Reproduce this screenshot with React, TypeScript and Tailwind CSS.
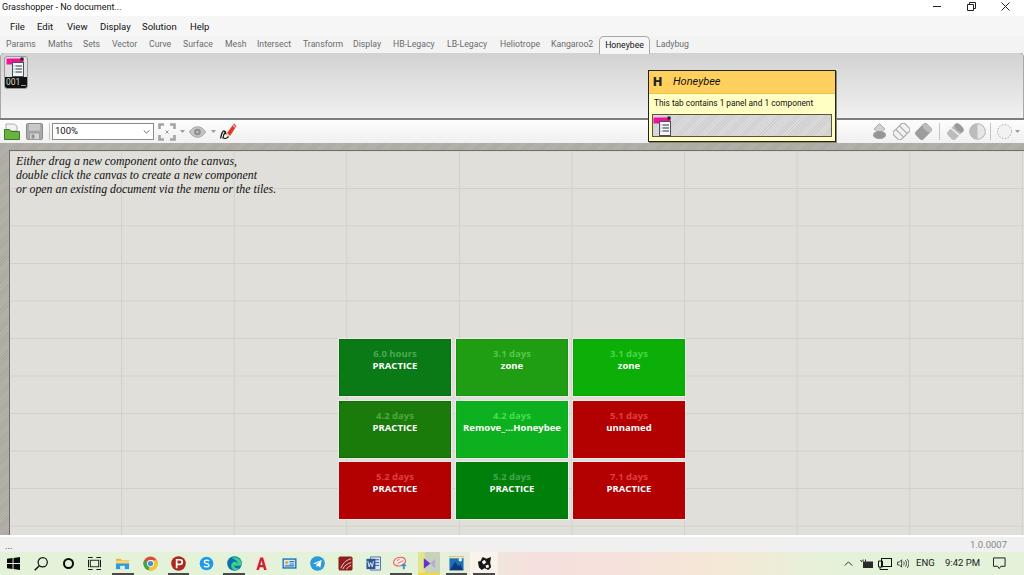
import type { ReactNode } from 'react'

const menus = [
  { label: 'File', cls: 'w-[27px]' },
  { label: 'Edit', cls: 'w-[30px]' },
  { label: 'View', cls: 'w-[33px]' },
  { label: 'Display', cls: 'w-[42px]' },
  { label: 'Solution', cls: 'w-[48px]' },
  { label: 'Help', cls: 'w-[30px]' },
]

const tabs = [
  { label: 'Params', cls: 'w-[42px]' },
  { label: 'Maths', cls: 'w-[35px]' },
  { label: 'Sets', cls: 'w-[29px]' },
  { label: 'Vector', cls: 'w-[37px]' },
  { label: 'Curve', cls: 'w-[34px]' },
  { label: 'Surface', cls: 'w-[42px]' },
  { label: 'Mesh', cls: 'w-[32px]' },
  { label: 'Intersect', cls: 'w-[46px]' },
  { label: 'Transform', cls: 'w-[50px]' },
  { label: 'Display', cls: 'w-[40px]' },
  { label: 'HB-Legacy', cls: 'w-[54px]' },
  { label: 'LB-Legacy', cls: 'w-[53px]' },
  { label: 'Heliotrope', cls: 'w-[51px]' },
  { label: 'Kangaroo2', cls: 'w-[48px]' },
]

const tiles = [
  { top: '6.0 hours', name: 'PRACTICE', bg: 'bg-[#0a7a16] border-[#0a6c14]', fade: 'text-[#4aa854]' },
  { top: '3.1 days', name: 'zone', bg: 'bg-[#1f9e14] border-[#1c9012]', fade: 'text-[#55c846]' },
  { top: '3.1 days', name: 'zone', bg: 'bg-[#0cae08] border-[#0ca408]', fade: 'text-[#44d844]' },
  { top: '4.2 days', name: 'PRACTICE', bg: 'bg-[#1a7a0a] border-[#156a08]', fade: 'text-[#4ea840]' },
  { top: '4.2 days', name: 'Remove_...Honeybee', bg: 'bg-[#0db01e] border-[#0ca81c]', fade: 'text-[#46de52]' },
  { top: '5.1 days', name: 'unnamed', bg: 'bg-[#b30000] border-[#b30000]', fade: 'text-[#e03e40]' },
  { top: '5.2 days', name: 'PRACTICE', bg: 'bg-[#b30000] border-[#b30000]', fade: 'text-[#e03e40]' },
  { top: '5.2 days', name: 'PRACTICE', bg: 'bg-[#00800a] border-[#047a0c]', fade: 'text-[#42a64a]' },
  { top: '7.1 days', name: 'PRACTICE', bg: 'bg-[#b30000] border-[#b30000]', fade: 'text-[#e03e40]' },
]

function PanelIcon({ className }: { className: string }) {
  return (
    <svg viewBox="0 0 20 20" className={className}>
      <path d="M0.500 1.500h17v4.500H7.500v1.500h-7z" fill="#f0129a" />
      <rect x="14.500" y="0.500" width="3" height="3" fill="#222" />
      <rect x="6.500" y="5.500" width="11" height="14" fill="#f4f6f8" stroke="#4a5058" strokeWidth="1" />
      <path d="M9.500 9h6.500M9.500 12h6.500M9.500 15h6.500" stroke="#30363c" strokeWidth="1.200" />
      <path d="M7.500 9h1M7.500 12h1M7.500 15h1" stroke="#4a9ad8" strokeWidth="1" />
    </svg>
  )
}

function FolderIcon() {
  return (
    <svg viewBox="0 0 16 17" className="w-4 h-[17px]">
      <path d="M2 8V1h8l3 2v5z" fill="#f2f2f2" stroke="#9a9a9a" strokeWidth="0.800" />
      <path d="M0.500 16.500V6.500h5l1.500 2h8.500v8z" fill="#66b43c" stroke="#2f6e22" strokeWidth="0.900" />
    </svg>
  )
}

function SaveIcon() {
  return (
    <svg viewBox="0 0 17 17" className="w-[17px] h-[17px]">
      <rect x="0.500" y="0.500" width="16" height="16" rx="1.500" fill="#a9a9a9" stroke="#8a8a8a" />
      <rect x="3" y="1" width="11" height="6.500" fill="#c9c9c9" />
      <rect x="3.500" y="10" width="10" height="6.500" fill="#d4d4d4" stroke="#8f8f8f" strokeWidth="0.700" />
      <rect x="5.500" y="11.500" width="3" height="4" fill="#8f8f8f" />
    </svg>
  )
}

function FitIcon() {
  return (
    <svg viewBox="0 0 18 18" className="w-[18px] h-[18px]" fill="none" stroke="#a4a4a4" strokeWidth="2.600">
      <path d="M1.500 6V1.500H6M12 1.500h4.500V6M16.500 12v4.500H12M6 16.500H1.500V12" />
      <path d="M7.500 7.500l3 3M10.500 7.500l-3 3" strokeWidth="1" stroke="#9a9a9a" />
    </svg>
  )
}

function EyeIcon() {
  return (
    <svg viewBox="0 0 17 12" className="w-[17px] h-3">
      <path d="M0.500 6C3 1.800 6 0.800 8.500 0.800S14 1.800 16.500 6C14 10.200 11 11.200 8.500 11.200S3 10.200 0.500 6z" fill="#c4c4c4" stroke="#a2a2a2" />
      <circle cx="8.500" cy="6" r="3.300" fill="#8c8c8c" />
      <circle cx="8.500" cy="6" r="1.400" fill="#b8b8b8" />
    </svg>
  )
}

function SketchIcon() {
  return (
    <svg viewBox="0 0 17 17" className="w-[17px] h-[17px]">
      <path d="M7 10L14 0.500l2.500 2.500L10 13z" fill="#e0362a" />
      <path d="M13 2l2.500 2.500" stroke="#f6c0b0" strokeWidth="1.200" />
      <path d="M7 10l3 3-2.500 1z" fill="#f0c890" />
      <path d="M.5 15.500C1.500 12 1.500 9 3.500 8c2-.8 1 3 3 2.800M6 8.500C4.500 10 3 12.500 3 15c2 1 4.500 0 5.500-1.500" fill="none" stroke="#1d1712" strokeWidth="1.300" />
    </svg>
  )
}

function Caret() {
  return (
    <svg viewBox="0 0 5 3" className="w-[5px] h-[3px]">
      <path d="M0 0h5L2.500 3z" fill="#9a9a9a" />
    </svg>
  )
}

function Capsule({ kind, className }: { kind: 'preview' | 'wire' | 'solid' | 'off' | 'half' | 'dash'; className: string }) {
  return (
    <svg viewBox="0 0 17 17" className={`w-[17px] h-[17px] ${className}`}>
      {kind === 'preview' && (
        <>
          <path d="M8.500 0.500L14 6 8.500 10 3 6z" fill="#d0d0d0" stroke="#acacac" />
          <ellipse cx="8.500" cy="12" rx="6.500" ry="4" fill="#969696" />
        </>
      )}
      {kind === 'wire' && (
        <g transform="rotate(45 8.500 8.500)" fill="#f2f2f2" stroke="#acacac" strokeWidth="1.200">
          <rect x="3" y="0.500" width="11" height="16" rx="3" />
          <path d="M3 6h11M3 11h11" />
        </g>
      )}
      {kind === 'solid' && (
        <g transform="rotate(45 8.500 8.500)">
          <rect x="3" y="0.500" width="11" height="16" rx="3" fill="#9c9c9c" />
          <ellipse cx="8.500" cy="3.500" rx="5.500" ry="3" fill="#bcbcbc" />
        </g>
      )}
      {kind === 'off' && (
        <>
          <g transform="rotate(45 8.500 8.500)">
            <rect x="3" y="0.500" width="11" height="16" rx="3" fill="#bcbcbc" />
            <ellipse cx="8.500" cy="3.500" rx="5.500" ry="3" fill="#9a9a9a" />
          </g>
          <path d="M1 3l15 12" stroke="#f3f3f3" strokeWidth="1.500" />
        </>
      )}
      {kind === 'half' && (
        <>
          <circle cx="8.500" cy="8.500" r="7.800" fill="#e6e6e6" stroke="#b0b0b0" />
          <path d="M8.500 .7a7.800 7.800 0 0 0 0 15.600z" fill="#bcbcbc" />
        </>
      )}
      {kind === 'dash' && <circle cx="8.500" cy="8.500" r="7" fill="#f2f2f2" stroke="#a6a6a6" strokeDasharray="1.500 1.500" />}
    </svg>
  )
}

function Sep({ className }: { className: string }) {
  return <div className={`w-px h-[17px] bg-[#c4c4c4] ${className}`} />
}

const appIcons: { icon: ReactNode; under?: boolean; hl?: string }[] = [
  {
    under: true,
    icon: (
      <>
        <path d="M1 3h5l1.500 1.500H15V8H1z" fill="#e9b63c" />
        <path d="M1 5h14v3H1z" fill="#f6d879" />
        <path d="M1 8h14v6H1z" fill="#2e9be0" />
        <path d="M5.500 14V10.500h5V14z" fill="#e8f0da" />
      </>
    ),
  },
  {
    icon: (
      <>
        <circle cx="8" cy="8" r="7.500" fill="#dd4b3c" />
        <path d="M8 8L1.500 4.200A7.500 7.500 0 0 0 6 15.200z" fill="#3fa64a" />
        <path d="M8 4.500h6.800A7.500 7.500 0 0 1 6 15.300z" fill="#f3c52e" />
        <circle cx="8" cy="8" r="3.700" fill="#fff" />
        <circle cx="8" cy="8" r="2.800" fill="#4a89dc" />
      </>
    ),
  },
  {
    under: true,
    icon: (
      <>
        <circle cx="8" cy="8" r="7.800" fill="#a92b1d" />
        <path d="M6 13V4h3.500a2.500 2.500 0 0 1 0 5H6" fill="none" stroke="#fff" strokeWidth="1.800" />
      </>
    ),
  },
  {
    icon: (
      <>
        <circle cx="8" cy="8" r="7.300" fill="#1e9be8" />
        <path d="M10.800 5.400C9.500 4 5.500 4.300 5.600 6.400 5.700 8.500 10.700 7.600 10.700 9.800 10.700 12 6.500 12 5.200 10.600" fill="none" stroke="#fff" strokeWidth="1.500" />
      </>
    ),
  },
  {
    under: true,
    icon: (
      <>
        <circle cx="8" cy="8" r="7.800" fill="#0d6fb0" />
        <path d="M5 2C9 0 14 2 15.500 7c.5 2-.5 3.500-2 3.500H7.500c.5 2.500 3.500 3.500 6 2.500-2 2.500-5 3-7 1.500C4 13 3.500 8 7 6.500c1.800-.8 4 .5 4.500 2C11.500 5 8 3 5 2z" fill="#38d08c" />
      </>
    ),
  },
  {
    icon: (
      <>
        <rect x="0.500" y="0.500" width="15" height="15" fill="#f5e6de" />
        <path d="M2.500 15L6.700 1.500h3L13.500 15h-2.800l-.8-3H6.100l-.9 3zM6.800 9.500h2.400L8 4.800z" fill="#c8242b" />
      </>
    ),
  },
  {
    icon: (
      <>
        <rect x="0.500" y="2.500" width="15" height="11" fill="#1e74b8" />
        <rect x="2" y="4" width="12" height="8" fill="#d8ecf4" />
        <circle cx="5" cy="7" r="1.800" fill="#e9a43c" />
        <path d="M8 6h5M8 8.500h5M3 10.500h10" stroke="#2979b5" strokeWidth="1.200" />
      </>
    ),
  },
  {
    icon: (
      <>
        <circle cx="8" cy="8" r="7.800" fill="#2a9ad8" />
        <path d="M3 8l9.500-3.800L11 12.500 8.500 10.500 7 12l-.3-3 4-3.500-5 3z" fill="#fff" />
      </>
    ),
  },
  {
    icon: (
      <>
        <rect x="0.500" y="0.500" width="15" height="15" rx="2" fill="#8f1d20" />
        <path d="M3 13C6 6 10 4 14 3M5 14c2-4 5-6 9-7M9 14c1-2 3-3 5-4" stroke="#f2d7d0" strokeWidth="1" fill="none" />
      </>
    ),
  },
  {
    icon: (
      <>
        <rect x="5" y="1" width="10.500" height="14" fill="#dbe7f4" stroke="#2b5797" strokeWidth="0.800" />
        <path d="M9 4h5M9 7h5M9 10h5" stroke="#2b5797" />
        <rect x="0.500" y="3" width="9.500" height="11" fill="#2b5797" />
        <path d="M2 5.500l1.300 6 1.700-4.500 1.700 4.500 1.300-6" stroke="#fff" strokeWidth="0.900" fill="none" />
      </>
    ),
  },
  {
    under: true,
    icon: (
      <>
        <ellipse cx="7" cy="6" rx="6.500" ry="4.500" fill="#f8ece4" stroke="#e0635a" strokeWidth="1.200" transform="rotate(-15 7 6)" />
        <path d="M4 5l3-1.500M5 8l6-3" stroke="#e0635a" />
        <path d="M9 10h5M11.500 8v6" stroke="#3e8ed0" strokeWidth="2" />
      </>
    ),
  },
  {
    hl: 'left-[3px] right-[3px] bg-[linear-gradient(to_right,#e3e58a_33%,#c6d2bc_33%)] border-b-2 border-[#f4d93a]',
    icon: (
      <>
        <path d="M3 2.500l7 5.500-7 5.500z" fill="#6a2fd0" />
        <path d="M15 3v10l-5-5z" fill="#b9a8d8" />
      </>
    ),
  },
  {
    under: true,
    icon: (
      <>
        <rect x="0.500" y="0.500" width="15" height="15" fill="#1c6fb8" />
        <path d="M0.500 0.500h15v2h-15z" fill="#f8e8a8" />
        <path d="M1 15L6.500 6l3.500 5 2-2 3 6z" fill="#0e3b78" />
        <circle cx="12" cy="4" r="1.800" fill="#fff" />
      </>
    ),
  },
  {
    under: true,
    hl: 'left-0 right-0 bg-[#faf3ec]',
    icon: (
      <>
        <path d="M1 6l3-1 2-4 4 2 5-2-1 6 1 5-3 3-4-2-3 2-3-3z" fill="#161616" />
        <path d="M5 6l3-2 2 3-3 2zM9 10l3-1 1 3-3 1z" fill="#f4f4f4" />
      </>
    ),
  },
]

function Taskbar() {
  return (
    <div className="h-[23px] flex items-center bg-[linear-gradient(to_right,#e4f2da_0%,#e4f2da_42%,#f6e0de_52%,#f6e1dc_60%,#f5e8d6_70%,#e4f2da_82%,#e4f2da_100%)]">
      <div className="w-[27px] h-full flex items-center justify-center">
        <svg viewBox="0 0 14 14" className="w-[13px] h-[13px]">
          <path d="M0 2l6-.9v5.400H0zM7 1l7-1v6.500H7zM0 7.500h6v5.400L0 12zM7 7.500h7V14l-7-1z" fill="#0a0a0a" />
        </svg>
      </div>
      <div className="w-[28px] h-full flex items-center justify-center">
        <svg viewBox="0 0 14 14" className="w-[14px] h-[14px]" fill="none" stroke="#111" strokeWidth="1.200">
          <circle cx="8.700" cy="5.300" r="4.600" />
          <path d="M5.300 8.700L.7 13.300" strokeWidth="1.500" />
        </svg>
      </div>
      <div className="w-[26px] h-full flex items-center justify-center">
        <div className="w-[11px] h-[11px] rounded-full border-2 border-[#0c0c0c]" />
      </div>
      <div className="w-[27px] h-full flex items-center justify-center">
        <svg viewBox="0 0 14 14" className="w-[13px] h-[13px]" fill="none" stroke="#1a1a1a" strokeWidth="1">
          <rect x="2.500" y="3.500" width="9" height="7" />
          <path d="M0 .5h5M0 13.500h5M9 .5h5M9 13.500h5M13.500 3v8M.5 3v8" strokeWidth="1.300" />
        </svg>
      </div>
      <div className="flex h-full pl-[1px]">
        {appIcons.map((app, i) => (
          <div key={i} className="relative w-[27.800px] h-full flex items-center justify-center">
            {app.hl && <div className={`absolute inset-y-0 ${app.hl}`} />}
            <svg viewBox="0 0 16 16" className="relative w-[15px] h-[15px]">
              {app.icon}
            </svg>
            {app.under && <div className="absolute bottom-0 left-[3px] right-[3px] h-[2px] bg-[#4a4a4a]" />}
          </div>
        ))}
      </div>
      <div className="ml-auto flex items-center h-full text-[#1a1a1a] text-[9.500px]">
        <svg viewBox="0 0 10 6" className="w-[9px] h-[5px] mr-[7px]" fill="none" stroke="#111">
          <path d="M.5 5.500L5 1l4.500 4.500" />
        </svg>
        <svg viewBox="0 0 13 10" className="w-[13px] h-[10px] mr-[5px]">
          <rect x="3" y="2.500" width="10" height="6.500" fill="#2a2a2a" />
          <path d="M.5 1l1.500 2M3 .5v2M5.500 .5v2" stroke="#222" />
        </svg>
        <svg viewBox="0 0 14 12" className="w-[14px] h-[12px] mr-[5px]" fill="none" stroke="#111">
          <rect x="3.500" y=".5" width="10" height="8" />
          <path d="M.5 3h4v6h-4zM2 9v2.500h8" />
        </svg>
        <svg viewBox="0 0 13 11" className="w-[12px] h-[11px] mr-[7px]" fill="none" stroke="#111" strokeWidth="0.800">
          <path d="M.5 4h2L5 1.500v8L2.500 7h-2zM7 3.500c1 1 1 3 0 4M9 2c1.800 2 1.800 5 0 7M11 .8c2.500 2.500 2.500 7 0 9.500" />
        </svg>
        <span className="w-[29px]">ENG</span>
        <span className="w-[32px] whitespace-nowrap">9:42 PM</span>
        <svg viewBox="0 0 14 13" className="w-[13px] h-[13px] ml-[16px] mr-[18px]" fill="none" stroke="#111">
          <path d="M.5.500h12.500v9H8.500L6.700 12 5 9.500H.5z" />
        </svg>
      </div>
    </div>
  )
}

export default function App() {
  return (
    <div className="relative w-[1024px] h-[575px] flex flex-col overflow-hidden bg-white font-['Roboto',sans-serif]">
      {/* title bar */}
      <div className="h-4 flex items-center bg-white pl-[2px] text-[9px] text-[#111]">
        <span>Grasshopper - No document...</span>
        <div className="ml-auto flex pr-[2px] pb-[3px]">
          <div className="w-[34px] h-[13px] flex items-center justify-center">
            <div className="w-[8px] h-px bg-[#222]" />
          </div>
          <div className="w-[34px] h-[13px] flex items-center justify-center">
            <svg viewBox="0 0 9 9" className="w-[9px] h-[9px]" fill="none" stroke="#222">
              <path d="M.5 2.500h6v6h-6zM2.500 2.500v-2h6v6h-2" />
            </svg>
          </div>
          <div className="w-[34px] h-[13px] flex items-center justify-center">
            <svg viewBox="0 0 9 9" className="w-[9px] h-[9px]" fill="none" stroke="#222">
              <path d="M.5.500l8 8M8.500.500l-8 8" />
            </svg>
          </div>
        </div>
      </div>

      {/* menu bar */}
      <div className="h-5 flex items-center bg-[#f6f6f6] pl-[10px] pt-[2px] text-[9.500px] text-[#111]">
        {menus.map((m) => (
          <span key={m.label} className={m.cls}>
            {m.label}
          </span>
        ))}
      </div>

      {/* component tabs */}
      <div className="relative z-10 h-[17px] -mb-px flex items-start bg-[#f3f3f3] pl-[6px] text-[8.700px] text-[#6c6c6c]">
        {tabs.map((t) => (
          <span key={t.label} className={`${t.cls} h-[18px] flex items-center whitespace-nowrap`}>
            {t.label}
          </span>
        ))}
        <span className="w-[51px] h-[18px] flex items-center justify-center bg-[#f6f6f6] border border-b-0 border-[#a8a8a8] rounded-t-[5px] text-[#111]">
          Honeybee
        </span>
        <span className="ml-[6px] h-[18px] flex items-center">Ladybug</span>
      </div>

      {/* ribbon */}
      <div className="h-[66px] flex items-start pl-[3px] pt-[3px] border-t border-x border-[#a8a8a8] rounded-t-[5px] bg-[linear-gradient(to_bottom,#d2d2d2,#f1f1f1)]">
        <div className="w-6 h-[33px] flex flex-col rounded-[3px] border border-[#9a9a9a] overflow-hidden bg-[#e0e0e0]">
          <div className="h-5 flex items-center justify-center">
            <PanelIcon className="w-5 h-5" />
          </div>
          <div className="flex-1 flex items-center gap-[1px] bg-[#111] pl-[1px] text-[8.500px] leading-none text-[#d8d8c8]">
            <span>001</span>
            <span className="w-[5px] h-px mt-[5px] bg-[#999]" />
          </div>
        </div>
      </div>

      {/* canvas toolbar */}
      <div className="h-[25px] flex items-center border-t-2 border-[#7d7d7d] bg-[linear-gradient(to_bottom,#fdfdfd,#f0f0f0)] pl-[4px]">
        <FolderIcon />
        <div className="ml-[6px]">
          <SaveIcon />
        </div>
        <Sep className="ml-[6px]" />
        <div className="ml-[2px] w-[102px] h-[17px] flex items-center justify-between bg-white border border-[#8a8a8a] px-[2px] text-[9.500px] text-[#111]">
          <span>100%</span>
          <svg viewBox="0 0 8 5" className="w-[7px] h-[4px] mr-[1px]" fill="none" stroke="#444">
            <path d="M.5.500L4 4 7.500.500" />
          </svg>
        </div>
        <div className="ml-[4px]">
          <FitIcon />
        </div>
        <div className="ml-[4px]">
          <Caret />
        </div>
        <div className="ml-[4px]">
          <EyeIcon />
        </div>
        <div className="ml-[5px]">
          <Caret />
        </div>
        <div className="ml-[4px]">
          <SketchIcon />
        </div>
        <div className="ml-auto flex items-center pr-[4px]">
          <Capsule kind="preview" className="mr-[5px]" />
          <Capsule kind="wire" className="mr-[5px]" />
          <Capsule kind="solid" className="mr-[7px]" />
          <Sep className="mr-[7px]" />
          <Capsule kind="off" className="mr-[5px]" />
          <Capsule kind="half" className="mr-[4px]" />
          <Sep className="mr-[5px]" />
          <Capsule kind="dash" className="mr-[2px]" />
          <Caret />
        </div>
      </div>

      {/* canvas area */}
      <div className="flex-1 min-h-0 flex flex-col bg-[repeating-linear-gradient(135deg,#aaa89f_0px,#aaa89f_1px,#b5b3ab_1px,#b5b3ab_2px)] pt-[7px] pl-[9px]">
        <div className="flex-1 min-h-0 border-t-[1.500px] border-l border-[#6f6f6f] bg-[#e0dfda] bg-[linear-gradient(to_right,#d1d0ca_1px,transparent_1px),linear-gradient(to_bottom,#d1d0ca_1px,transparent_1px)] bg-[size:112.600px_37.500px] bg-[position:-1.500px_-0.500px] pl-[6px] pt-[3px]">
          <p className="font-['Liberation_Serif',serif] italic text-[11.850px] leading-[14px] text-[#111]">
            Either drag a new component onto the canvas,
            <br />
            double click the canvas to create a new component
            <br />
            or open an existing document via the menu or the tiles.
          </p>
          <div className="mt-[143px] ml-[323px] grid grid-cols-[112px_112px_112px] grid-rows-[57px_57px_57px] gap-x-[5px] gap-y-[4.500px] font-['Open_Sans',sans-serif]">
            {tiles.map((t, i) => (
              <div key={i} className={`border ${t.bg} flex flex-col items-center pt-[7px] ring-1 ring-[#ecebe7]`}>
                <span className={`text-[9.500px] leading-[13px] font-bold ${t.fade}`}>{t.top}</span>
                <span className="-mt-px text-[9.500px] leading-[13px] font-bold text-white whitespace-nowrap">{t.name}</span>
              </div>
            ))}
          </div>
        </div>
      </div>

      {/* status bar */}
      <div className="h-[17px] flex items-center justify-between border-t-2 border-white bg-[#f0f0f0] pl-[5px] pr-[17px] text-[9.500px] text-[#888]">
        <span className="text-[#222] leading-none mt-[3px]">...</span>
        <span className="mt-[1px]">1.0.0007</span>
      </div>

      <Taskbar />

      {/* tab tooltip */}
      <div className="absolute left-[648px] top-[70px] w-[188px] h-[72px] flex flex-col border border-[#222] bg-[#ffffc4] shadow-[1px_1px_0_#8a8a70]">
        <div className="h-[23px] flex items-center bg-[#ffd05e] border-b border-[#f4c040] pl-[4px] text-[#111]">
          <span className="w-[20px] text-[13px] font-black text-[#222]">H</span>
          <span className="text-[11px] italic">Honeybee</span>
        </div>
        <div className="h-[20px] flex items-center pl-[5px] pb-[2px] text-[8.300px] text-[#111]">This tab contains 1 panel and 1 component</div>
        <div className="mx-[3px] h-[23px] flex items-center border border-[#5d5338] bg-[repeating-linear-gradient(135deg,#dcdcdc_0px,#dcdcdc_1px,#cfcfcf_1px,#cfcfcf_2px)]">
          <PanelIcon className="w-5 h-5" />
        </div>
      </div>
    </div>
  )
}
